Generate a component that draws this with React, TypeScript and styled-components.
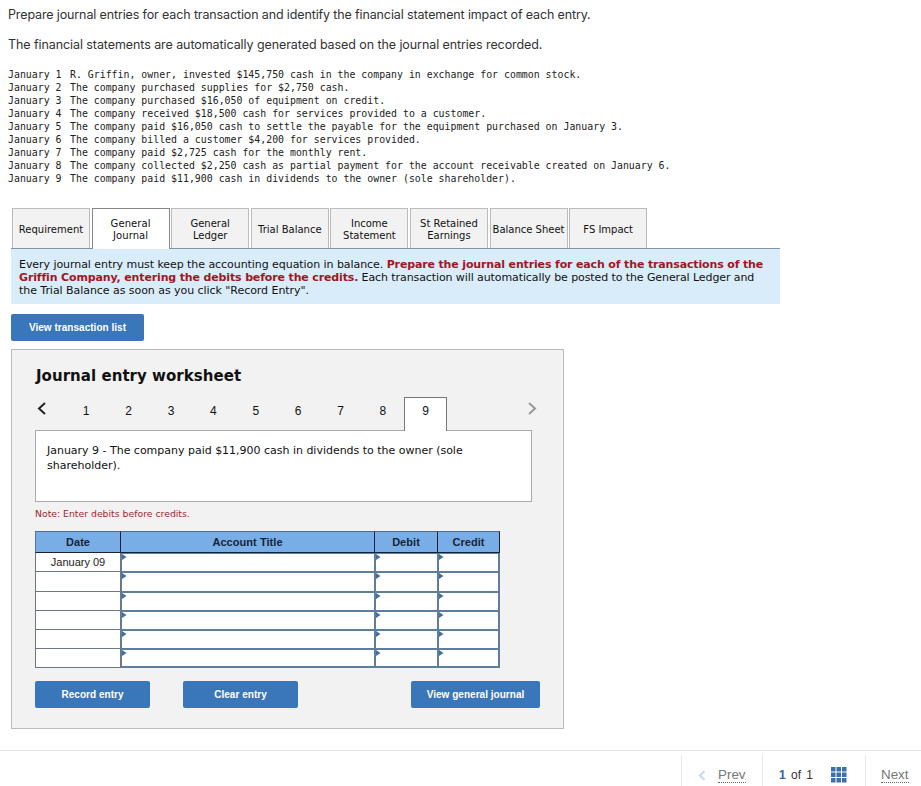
import React from "react";
import styled, { createGlobalStyle } from "styled-components";

const verdana = `Verdana, "DejaVu Sans", sans-serif`;
const arial = `"Liberation Sans", Arial, sans-serif`;

const GlobalStyle = createGlobalStyle`
  * { box-sizing: border-box; }
  body { margin: 0; background: #fff; overflow: hidden; }
  button { font: inherit; }
`;

const Page = styled.div`
  width: 921px;
  height: 786px;
  display: flex;
  flex-direction: column;
  overflow: hidden;
  color: #111;
  font-family: ${verdana};
  font-size: 11px;
  white-space: nowrap;
`;

const Intro = styled.header`
  padding: 0 8px;
  height: 67px;
  color: #333;
  font-family: Inter, "Open Sans", sans-serif;
  font-size: 12.5px;
  line-height: 30px;
`;

const IntroLine = styled.p<{ $spacing: number }>`
  margin: 0;
  letter-spacing: ${(p) => p.$spacing}px;
`;

const Events = styled.dl`
  margin: 0;
  padding: 1px 8px 0;
  height: 141px;
  display: grid;
  grid-template-columns: 62px auto;
  grid-auto-rows: 13px;
  align-content: start;
  font-family: "DejaVu Sans Mono", monospace;
  font-size: 9.9px;
  line-height: 13px;
  color: #222;
  dt, dd { margin: 0; }
`;

const Tabs = styled.nav`
  height: 40px;
  padding-left: 12px;
  display: flex;
  gap: 1.6px;
`;

const Tab = styled.div<{ $active?: boolean }>`
  width: 78px;
  height: ${(p) => (p.$active ? 41 : 40)}px;
  z-index: 1;
  display: flex;
  align-items: center;
  justify-content: center;
  padding-top: ${(p) => (p.$active ? 2 : 3)}px;
  text-align: center;
  white-space: pre;
  font-size: 10px;
  letter-spacing: ${(p) => (p.$active ? 0.1 : 0)}px;
  line-height: 12px;
  background: ${(p) => (p.$active ? "#fff" : "#f2f2f2")};
  border: 1px solid ${(p) => (p.$active ? "#888" : "#bbb")};
  border-bottom: 0;
`;

const Instructions = styled.section`
  width: 769px;
  height: 56px;
  margin-left: 11px;
  padding: 9px 8px 0;
  border-top: 1px solid #7f95a3;
  background: #d9ecfa;
  line-height: 13px;
`;

const Line = styled.div<{ $spacing?: number }>`
  letter-spacing: ${(p) => p.$spacing ?? 0}px;
`;

const Strong = styled.strong`
  color: #a31621;
  letter-spacing: -0.145px;
`;

const Button = styled.button<{ $width: number }>`
  width: ${(p) => p.$width}px;
  height: 27px;
  padding: 0;
  border: 0;
  border-radius: 2px;
  background: #3a76ba;
  color: #fff;
  font: bold 10px ${arial};
  letter-spacing: 0.03px;
  line-height: 27px;
`;

const ListAction = styled.div`
  padding: 10px 11px 8px;
  height: 45px;
  display: flex;
`;

const Worksheet = styled.section`
  width: 553px;
  height: 380px;
  margin-left: 11px;
  padding: 0 23px;
  border: 1px solid #bbb;
  background: #f2f2f2;
`;

const Title = styled.h2`
  margin: 0;
  height: 47px;
  padding: 17px 0 0 1px;
  font-size: 15px;
  line-height: 18px;
  letter-spacing: 0.04px;
  color: #111;
`;

const Pager = styled.div`
  height: 33px;
  display: flex;
  align-items: flex-start;
`;

const Arrow = styled.div<{ $next?: boolean }>`
  width: ${(p) => (p.$next ? 14 : 30)}px;
  height: 26px;
  flex: none;
  margin-left: ${(p) => (p.$next ? 78 : 0)}px;
  padding: 5px 0 0 2px;
  color: ${(p) => (p.$next ? "#999" : "#222")};
  svg { display: block; }
`;

const PageTab = styled.div<{ $active?: boolean }>`
  width: ${(p) => (p.$active ? 43 : 42.4)}px;
  height: ${(p) => (p.$active ? 34 : 33)}px;
  z-index: 1;
  padding-top: ${(p) => (p.$active ? 6 : 7)}px;
  text-align: center;
  font: 12px/14px ${arial};
  border: ${(p) => (p.$active ? "1px solid #777" : "0")};
  border-bottom: 0;
  background: ${(p) => (p.$active ? "#fff" : "transparent")};
`;

const Description = styled.div`
  width: 497px;
  height: 72px;
  padding: 12px 11px;
  border: 1px solid #aaa;
  background: #fff;
  line-height: 15px;
`;

const Note = styled.div`
  height: 29px;
  padding-top: 5px;
  color: #9b2a2e;
  font-size: 9.3px;
  line-height: 14px;
`;

const Grid = styled.div`
  width: 465px;
  height: 137px;
  display: grid;
  grid-template-columns: 86px 254px 63px 62px;
  grid-template-rows: 22px 19px 20px 19px 19px 19px 19px;
  font-family: ${arial};
  font-size: 11px;
  text-align: center;
`;

const Head = styled.div<{ $first?: boolean }>`
  padding-top: 3px;
  border-top: 1px solid #4d6d91;
  border-bottom: 1px solid #16243a;
  border-right: 1px solid #16243a;
  border-left: ${(p) => (p.$first ? "1px solid #5a7595" : "0")};
  background: #79ade6;
  font-weight: bold;
  letter-spacing: 0.05px;
  line-height: 15px;
  color: #14253a;
`;

const DateCell = styled.div`
  border: solid #6f777e;
  border-width: 0 1px 1px;
  background: #fff;
  line-height: 18px;
  color: #222;
`;

const EntryCell = styled.div<{ $lastRow: boolean; $lastCol: boolean }>`
  border: solid #5f7e9e;
  border-width: 1px ${(p) => (p.$lastCol ? 2 : 1)}px ${(p) => (p.$lastRow ? 2 : 1)}px 1px;
  background: #fff;
  svg { display: block; }
`;

const Actions = styled.div`
  width: 505px;
  margin-top: 13px;
  display: grid;
  grid-template-columns: 148px 228px auto;
`;

const Footer = styled.footer`
  height: 36px;
  margin-top: 21px;
  padding: 4px 0 0 681px;
  border-top: 1px solid #e8e8e8;
  display: flex;
  font-family: ${arial};
`;

const FooterPart = styled.div<{ $width: number; $pad: number }>`
  width: ${(p) => p.$width}px;
  height: 40px;
  flex: none;
  padding: 12px 0 0 ${(p) => p.$pad}px;
  border-left: 1px solid #e8e8e8;
  display: flex;
  align-items: flex-start;
  line-height: 16px;
`;

const PageLink = styled.a`
  height: 16px;
  color: #777;
  font-size: 13.4px;
  border-bottom: 1px dotted #666;
`;

const PrevIcon = styled.svg`
  margin: 3px 12px 0 0;
`;

const Count = styled.span`
  width: 52px;
  font-size: 12px;
  word-spacing: 2px;
  color: #333;
  b { color: #34659d; }
`;

const events = [
  "R. Griffin, owner, invested $145,750 cash in the company in exchange for common stock.",
  "The company purchased supplies for $2,750 cash.",
  "The company purchased $16,050 of equipment on credit.",
  "The company received $18,500 cash for services provided to a customer.",
  "The company paid $16,050 cash to settle the payable for the equipment purchased on January 3.",
  "The company billed a customer $4,200 for services provided.",
  "The company paid $2,725 cash for the monthly rent.",
  "The company collected $2,250 cash as partial payment for the account receivable created on January 6.",
  "The company paid $11,900 cash in dividends to the owner (sole shareholder).",
];

const tabs = [
  "Requirement",
  "General\nJournal",
  "General\nLedger",
  "Trial Balance",
  "Income\nStatement",
  "St Retained\nEarnings",
  "Balance Sheet",
  "FS Impact",
];

const Marker = () => (
  <svg width="5" height="7" viewBox="0 0 5 7">
    <path d="M0 0 4.5 3 0 6Z" fill="#416f9f" />
  </svg>
);

export default function App() {
  return (
    <>
      <GlobalStyle />
      <Page>
        <Intro>
          <IntroLine $spacing={-0.13}>
            Prepare journal entries for each transaction and identify the financial statement impact of each entry.
          </IntroLine>
          <IntroLine $spacing={-0.08}>
            The financial statements are automatically generated based on the journal entries recorded.
          </IntroLine>
        </Intro>
        <Events>
          {events.map((text, i) => (
            <React.Fragment key={i}>
              <dt>January {i + 1}</dt>
              <dd>{text}</dd>
            </React.Fragment>
          ))}
        </Events>
        <Tabs>
          {tabs.map((label, i) => (
            <Tab key={label} $active={i === 1}>{label}</Tab>
          ))}
        </Tabs>
        <Instructions>
          <Line $spacing={-0.06}>
            Every journal entry must keep the accounting equation in balance.{" "}
            <Strong>Prepare the journal entries for each of the transactions of the</Strong>
          </Line>
          <Line $spacing={-0.095}>
            <Strong>Griffin Company, entering the debits before the credits.</Strong> Each transaction will
            automatically be posted to the General Ledger and
          </Line>
          <Line $spacing={-0.05}>the Trial Balance as soon as you click "Record Entry".</Line>
        </Instructions>
        <ListAction>
          <Button $width={133}>View transaction list</Button>
        </ListAction>
        <Worksheet>
          <Title>Journal entry worksheet</Title>
          <Pager>
            <Arrow>
              <svg width="10" height="13" viewBox="0 0 10 13">
                <path d="M8 1 2 6.5 8 12" fill="none" stroke="currentColor" strokeWidth="2" />
              </svg>
            </Arrow>
            {[1, 2, 3, 4, 5, 6, 7, 8, 9].map((n) => (
              <PageTab key={n} $active={n === 9}>{n}</PageTab>
            ))}
            <Arrow $next>
              <svg width="10" height="13" viewBox="0 0 10 13">
                <path d="M2 1 8 6.5 2 12" fill="none" stroke="currentColor" strokeWidth="2" />
              </svg>
            </Arrow>
          </Pager>
          <Description>
            <Line $spacing={-0.015}>January 9 - The company paid $11,900 cash in dividends to the owner (sole</Line>
            <Line>shareholder).</Line>
          </Description>
          <Note>Note: Enter debits before credits.</Note>
          <Grid>
            <Head $first>Date</Head>
            <Head>Account Title</Head>
            <Head>Debit</Head>
            <Head>Credit</Head>
            {[0, 1, 2, 3, 4, 5].map((row) => (
              <React.Fragment key={row}>
                <DateCell>{row === 0 ? "January 09" : ""}</DateCell>
                {[0, 1, 2].map((col) => (
                  <EntryCell key={col} $lastRow={row === 5} $lastCol={col === 2}><Marker /></EntryCell>
                ))}
              </React.Fragment>
            ))}
          </Grid>
          <Actions>
            <Button $width={115}>Record entry</Button>
            <Button $width={115}>Clear entry</Button>
            <Button $width={129}>View general journal</Button>
          </Actions>
        </Worksheet>
        <Footer>
          <FooterPart $width={81} $pad={16}>
            <PrevIcon width="8" height="11" viewBox="0 0 8 11">
              <path d="M6.5 1 2 5.5 6.5 10" fill="none" stroke="#cfdbea" strokeWidth="2.4" />
            </PrevIcon>
            <PageLink>Prev</PageLink>
          </FooterPart>
          <FooterPart $width={103} $pad={16}>
            <Count><b>1</b> of 1</Count>
            <svg width="16" height="16" viewBox="0 0 16 16" fill="#3b70a8">
              {[0, 5.5, 11].map((y) =>
                [0, 5.5, 11].map((x) => <rect key={`${x}-${y}`} x={x} y={y} width="4.5" height="4.5" />)
              )}
            </svg>
          </FooterPart>
          <FooterPart $width={56} $pad={15}>
            <PageLink>Next</PageLink>
          </FooterPart>
        </Footer>
      </Page>
    </>
  );
}
